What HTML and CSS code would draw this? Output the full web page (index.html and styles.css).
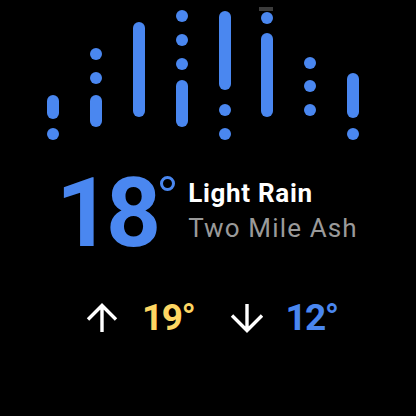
FILE: index.html
```html
<!DOCTYPE html>
<html>
<head>
<meta charset="utf-8">
<link rel="stylesheet" href="styles.css">
</head>
<body>
<div class="face">
  <div class="rain">
    <div class="col c1"><div class="bar"></div><div class="dot"></div></div>
    <div class="col c2"><div class="dot"></div><div class="dot"></div><div class="bar"></div></div>
    <div class="col c3"><div class="bar"></div></div>
    <div class="col c4"><div class="dot"></div><div class="dot"></div><div class="dot"></div><div class="bar"></div></div>
    <div class="col c5"><div class="bar"></div><div class="dot"></div><div class="dot"></div></div>
    <div class="col c6"><div class="notch"></div><div class="dot"></div><div class="bar"></div></div>
    <div class="col c7"><div class="dot"></div><div class="dot"></div><div class="dot"></div></div>
    <div class="col c8"><div class="bar"></div><div class="dot"></div></div>
  </div>
  <div class="main">
    <div class="temp"><span class="num">18</span><span class="deg"></span></div>
    <div class="desc">
      <div class="cond">Light Rain</div>
      <div class="place">Two Mile Ash</div>
    </div>
  </div>
  <div class="range">
    <svg class="arrow" width="32" height="30" viewBox="0 0 32 30"><path d="M16 29V3M2 16.5L16 2.5L30 16.5" fill="none" stroke="#fff" stroke-width="3.4"/></svg>
    <span class="hi">19°</span>
    <svg class="arrow down" width="34" height="30" viewBox="0 0 34 30"><path d="M17 1V27M2 12.5L17 27.5L32 12.5" fill="none" stroke="#fff" stroke-width="3.4"/></svg>
    <span class="lo">12°</span>
  </div>
</div>
</body>
</html>
```
FILE: styles.css
```css
html, body {
  margin: 0;
  padding: 0;
  background: #000;
}
.face {
  width: 416px;
  height: 416px;
  background: #000;
  font-family: Roboto, "Liberation Sans", sans-serif;
  position: relative;
}
.rain {
  display: flex;
  gap: 30.8px;
  padding-left: 47.4px;
  height: 145px;
}
.col {
  width: 12px;
  display: flex;
  flex-direction: column;
  position: relative;
}
.dot, .bar {
  width: 12px;
  border-radius: 6px;
  background: #4a87f0;
  flex: none;
}
.dot { height: 12px; }

.c1 .bar { margin-top: 95px; height: 24px; }
.c1 .dot { margin-top: 8.5px; }

.c2 .dot:nth-child(1) { margin-top: 48px; }
.c2 .dot:nth-child(2) { margin-top: 12px; }
.c2 .bar { margin-top: 10.5px; height: 32.5px; }

.c3 .bar { margin-top: 22px; height: 95px; }

.c4 .dot:nth-child(1) { margin-top: 10px; }
.c4 .dot:nth-child(2) { margin-top: 12px; }
.c4 .dot:nth-child(3) { margin-top: 11.5px; }
.c4 .bar { margin-top: 10.5px; height: 47px; }

.c5 .bar { margin-top: 11px; height: 79px; }
.c5 .dot:nth-child(2) { margin-top: 14px; }
.c5 .dot:nth-child(3) { margin-top: 11.5px; }

.c6 .dot { margin-top: 11.5px; }
.c6 .bar { margin-top: 9.5px; height: 84px; }
.c6 .notch {
  position: absolute;
  left: -2px;
  top: 7px;
  width: 14px;
  height: 4px;
  background: #3c3c3c;
}

.c7 .dot:nth-child(1) { margin-top: 56.5px; }
.c7 .dot:nth-child(2) { margin-top: 11.5px; }
.c7 .dot:nth-child(3) { margin-top: 12px; }

.c8 .bar { margin-top: 73px; height: 45px; }
.c8 .dot { margin-top: 9.5px; }

.main {
  display: flex;
  align-items: flex-start;
  margin-top: 20px;
  padding-left: 56px;
}
.temp {
  display: flex;
  align-items: flex-start;
  color: #4a87f0;
}
.num {
  font-size: 96px;
  font-weight: 700;
  line-height: 96px;
  letter-spacing: -5px;
}
.deg {
  width: 9px;
  height: 9px;
  border: 3px solid #4a87f0;
  border-radius: 50%;
  margin-top: 11px;
  margin-left: 4px;
}
.desc {
  margin-left: 13px;
  margin-top: 10px;
}
.cond {
  color: #fff;
  font-size: 26px;
  font-weight: 700;
  line-height: 36px;
  letter-spacing: 0.7px;
}
.place {
  color: #9a9a9a;
  font-size: 26px;
  font-weight: 400;
  line-height: 34px;
  letter-spacing: 1.15px;
}
.range {
  display: flex;
  align-items: center;
  margin-top: 40px;
  padding-left: 86px;
  height: 34px;
}
.arrow { flex: none; }
.hi, .lo {
  font-size: 37px;
  font-weight: 700;
  line-height: 34px;
  letter-spacing: -1.5px;
}
.hi {
  color: #fdd663;
  margin-left: 24px;
}
.arrow.down { margin-left: 36px; }
.lo {
  color: #4a87f0;
  margin-left: 21px;
}
```
